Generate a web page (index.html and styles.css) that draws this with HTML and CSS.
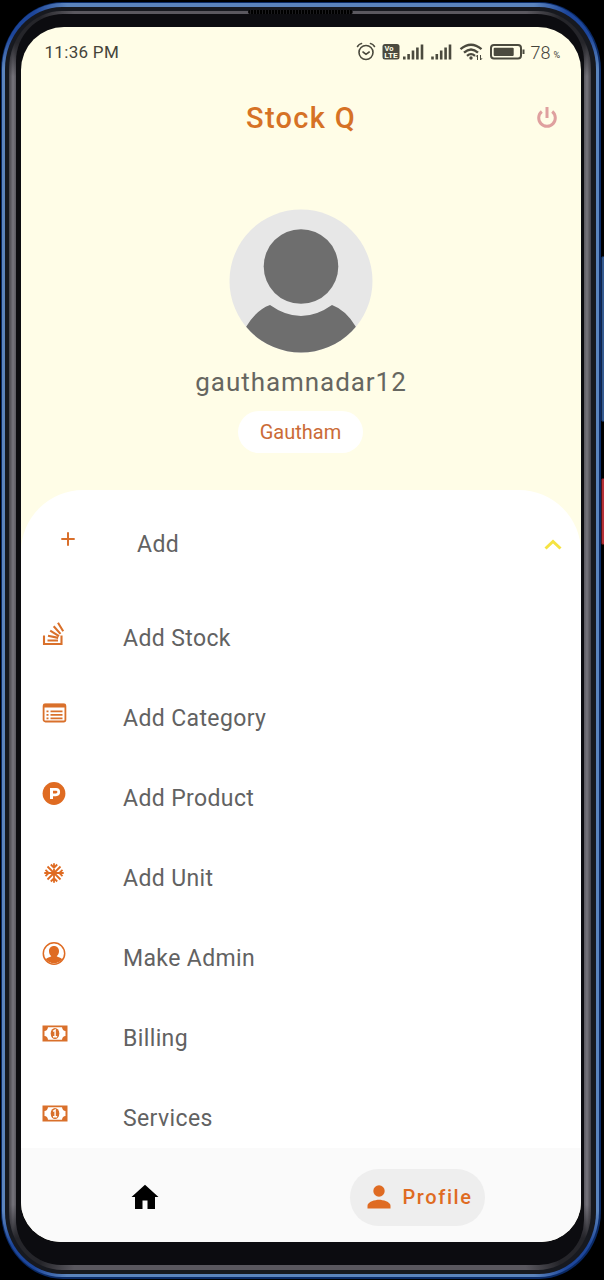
FILE: index.html
```html
<!DOCTYPE html>
<html lang="en">
<head>
<meta charset="utf-8">
<title>Stock Q</title>
<link rel="stylesheet" href="styles.css">
</head>
<body>
<div class="stage">
  <div class="key volume"></div>
  <div class="key power-key"></div>
  <div class="case"><div class="rim"><div class="groove"><div class="metal"><div class="bezel">
    <main class="screen">
      <section class="hero">
        <div class="status">
          <span class="clock">11:36 PM</span>
          <svg class="status-icons" width="172" height="22" viewBox="0 0 172 22" fill="none" stroke="#4b4a3e">
            <g stroke-width="1.6" stroke-linecap="round"><circle cx="12" cy="11.5" r="7"/><path d="M3.500 5.500Q5 3 7.500 2.500M16.500 2.500Q19 3 20.500 5.500M9 11l3 2.300 3.200-2.300"/></g>
            <rect x="28.500" y="3" width="17" height="15.500" rx="2.500" fill="#4b4a3e" stroke="none"/>
            <text x="30.500" y="10" class="volte">Vo</text><text x="30.300" y="17.300" class="volte" textLength="13.500" lengthAdjust="spacingAndGlyphs">LTE</text>
            <path stroke-width="2.600" d="M50.300 18.500v-3M54.600 18.500v-5.500M59 18.500v-9M63.400 18.500V6.500M68 18.500V3.500M78.500 18.500v-3M82.800 18.500v-5.500M87.200 18.500v-9M91.600 18.500V6.500M96 18.500V3.500"/>
            <path stroke-width="2.300" d="M106.500 8.200q10.500-9 21 0M110 11.700q7-6.500 14 0M113 14.900q4-3.500 8 0"/>
            <circle cx="117" cy="17" r="1.700" fill="#4b4a3e" stroke="none"/>
            <path stroke-width="1" d="M123.500 19v-5l-1.500 1.800M126.500 14v5l1.500-1.800"/>
            <rect x="137" y="4" width="30" height="13.500" rx="3" stroke-width="2"/><rect x="139.700" y="6.700" width="20" height="8.200" rx="1" fill="#4b4a3e" stroke="none"/><path stroke-width="2" d="M169.500 8.500v4.500"/>
          </svg>
          <span class="charge">78</span><span class="pct">%</span>
        </div>
        <header class="topbar">
          <h1 class="brand">Stock Q</h1>
          <svg class="logout" width="22" height="22" viewBox="0 0 22 22" fill="none" stroke="#dfa09f" stroke-width="3"><path d="M5.800 4.500a8.300 8.300 0 1 0 10.400 0M11 0v11"/></svg>
        </header>
        <svg class="avatar" width="144" height="144" viewBox="0 0 144 144">
          <defs><clipPath id="disc"><circle cx="72" cy="72" r="71.500"/></clipPath></defs>
          <circle cx="72" cy="72" r="71.500" fill="#e7e7e7"/>
          <g clip-path="url(#disc)" fill="#6e6e6e"><path d="M41 96Q72 118 103 96Q117 101 127 118L127 144H17V118Q27 101 41 96Z"/><circle cx="72" cy="57.500" r="37.300"/></g>
        </svg>
        <div class="username">gauthamnadar12</div>
        <div class="badge">Gautham</div>
      </section>
      <section class="sheet">
        <div class="add-head">
          <svg class="plus" width="14" height="14" viewBox="0 0 14 14" stroke="#d96f2b" stroke-width="2"><path d="M7 .3v13.400M.3 7h13.400"/></svg>
          <span class="add-title">Add</span>
          <svg class="chevron" width="18" height="11" viewBox="0 0 18 11" fill="none" stroke="#f5e342" stroke-width="3"><path d="M1.500 9.500L9 2.500l7.500 7"/></svg>
        </div>
        <ul class="menu">
          <li><svg width="28" height="28" viewBox="0 0 28 28" fill="none" stroke="#d9702b" stroke-width="2.100"><path d="M3 15.500v8.500h17.500v-8.500M6.500 20.500h10.500M7 15.700l10.200 2.200M9.200 10.700l8.800 5.500M12.700 6.200l6.800 7.700M17 2.700l5.200 8.500"/></svg><span>Add Stock</span></li>
          <li><svg width="28" height="28" viewBox="0 0 28 28" fill="none" stroke="#d9702b"><rect x="2.600" y="4.500" width="21.800" height="17" rx="1.800" stroke-width="1.800"/><path stroke-width="3.800" d="M2.500 5.700h22"/><path stroke-width="1.700" d="M5.500 11.300h2M9.500 11.300h12M5.500 14.800h2M9.500 14.800h12M5.500 18.300h2M9.500 18.300h12"/></svg><span>Add Category</span></li>
          <li><svg width="28" height="28" viewBox="0 0 28 28"><circle cx="13" cy="13.500" r="11.400" fill="#df6b22"/><path fill="#fff" fill-rule="evenodd" d="M9 8h6a4 4 0 0 1 0 8.200h-3V19H9ZM12 10.700v2.800h3a1.400 1.400 0 0 0 0-2.800Z"/></svg><span>Add Product</span></li>
          <li><svg width="28" height="28" viewBox="0 0 28 28" fill="none" stroke="#df6b22" stroke-width="1.800"><path d="M13 3.300v19.400M3.300 13h19.400M6.500 6.500l13 13M19.500 6.500l-13 13M9.800 4.500l3.200 3.200 3.200-3.200M9.800 21.500l3.200-3.200 3.200 3.200M4.500 9.800l3.200 3.200-3.200 3.200M21.500 9.800l-3.200 3.200 3.200 3.200"/></svg><span>Add Unit</span></li>
          <li><svg width="28" height="28" viewBox="0 0 28 28"><circle cx="13" cy="13.500" r="10.700" fill="none" stroke="#df6b22" stroke-width="1.500"/><path fill="#df6b22" d="M13 6c3 0 5 2.200 5 5.200 0 2-1 4-2.300 5 1.500 1.100 4.300 1.300 5.600 3-4.300 5.400-12.300 5.400-16.600 0 1.300-1.700 4.100-1.900 5.600-3C9 15.200 8 13.200 8 11.200 8 8.200 10 6 13 6Z"/></svg><span>Make Admin</span></li>
          <li><svg width="28" height="28" viewBox="0 0 28 28"><path fill="#d9702b" fill-rule="evenodd" d="M1.500 5.500h25v16H1.500ZM7 7.300Q6.500 11 3.500 11v5q3 0 3.500 3.700h14Q21.500 16 24.500 16v-5q-3 0-3.500-3.700Z"/><ellipse cx="14" cy="13.500" rx="4.300" ry="5.500" fill="#d9702b"/><path fill="none" stroke="#fff" stroke-width="1.400" d="M12.100 11.300l2-1.300v6.700M12 16.700h4.200"/></svg><span>Billing</span></li>
          <li><svg width="28" height="28" viewBox="0 0 28 28"><path fill="#d9702b" fill-rule="evenodd" d="M1.500 5.500h25v16H1.500ZM7 7.300Q6.500 11 3.500 11v5q3 0 3.500 3.700h14Q21.500 16 24.500 16v-5q-3 0-3.500-3.700Z"/><ellipse cx="14" cy="13.500" rx="4.300" ry="5.500" fill="#d9702b"/><path fill="none" stroke="#fff" stroke-width="1.400" d="M12.100 11.300l2-1.300v6.700M12 16.700h4.200"/></svg><span>Services</span></li>
        </ul>
      </section>
      <nav class="tabs">
        <svg class="home" width="28" height="26" viewBox="0 0 28 26"><path d="M14 .7L27.500 13h-3.500v12h-7.500v-8.500h-5V25H4V13H.5Z"/></svg>
        <div class="profile"><svg width="24" height="24" viewBox="0 0 24 24" fill="#df6b22"><circle cx="12" cy="6" r="5.700"/><path d="M.5 23.500v-2.700c0-4 7.700-6 11.500-6s11.500 2 11.500 6v2.700Z"/></svg><span>Profile</span></div>
      </nav>
    </main>
  </div></div></div></div></div>
  <div class="speaker"></div>
</div>
</body>
</html>
```
FILE: styles.css
```css
* { box-sizing: border-box; }
body { margin: 0; background: #000; font-family: Roboto, "Liberation Sans", sans-serif; }
.stage { position: relative; width: 604px; height: 1280px; padding: 2px 3px 1px 1px; overflow: hidden; background: #000; }
.key { position: absolute; left: 601px; width: 5px; border: 1px solid #11264a; border-radius: 2px; }
.volume { top: 256px; height: 166px; background: #345a91; }
.power-key { top: 478px; height: 67px; background: #b62f37; border-color: #4b1519; }
.speaker { position: absolute; left: 248px; top: 10px; width: 105px; height: 4px; border-radius: 2px; background: repeating-linear-gradient(90deg, #000 0 2px, #1c1c1e 2px 3px); }

.case, .rim, .groove, .metal, .bezel { height: 100%; }
.case { padding: 1px 2px 2px 1px; border-radius: 62px / 68px; background: #0a2a66; }
.rim {
  padding: 4px 3px 3px; border-radius: 60px / 66px;
  background:
    radial-gradient(circle at 12px 12px, #1d469b 20px, transparent 54px),
    radial-gradient(circle at calc(100% - 12px) 12px, #1d469b 20px, transparent 54px),
    radial-gradient(circle at 12px calc(100% - 12px), #1d469b 20px, transparent 54px),
    radial-gradient(circle at calc(100% - 12px) calc(100% - 12px), #1d469b 20px, transparent 54px),
    #5b84bd;
}
.groove { padding: 4px 5px 4px 4px; border-radius: 57px / 62px; background: #17191f; }
.metal {
  padding: 3px 7px 5px; border-radius: 53px / 58px;
  background:
    radial-gradient(circle at 12px 12px, #25252a 20px, transparent 54px),
    radial-gradient(circle at calc(100% - 12px) 12px, #25252a 20px, transparent 54px),
    radial-gradient(circle at 12px calc(100% - 12px), #25252a 20px, transparent 54px),
    radial-gradient(circle at calc(100% - 12px) calc(100% - 12px), #25252a 20px, transparent 54px),
    linear-gradient(90deg, #45434a 0, #77757d 4px, #5a585f 7px, #5a585f calc(100% - 7px), #77757d calc(100% - 4px), #45434a 100%);
}
.bezel { padding: 13px 3px 22px 5px; border-radius: 47px 47px 45px 45px; background: #0c0c10; }
.screen { display: flex; flex-direction: column; height: 1215px; overflow: hidden; border-radius: 43px 43px 40px 40px; background: #fffde7; }

.hero { display: flex; flex-direction: column; align-items: center; height: 463px; flex: none; }
.status { display: flex; align-items: center; width: 100%; height: 50px; padding: 0 21px 0 23.5px; color: #45443a; }
.clock { flex: 1; font-size: 17px; letter-spacing: .3px; }
.status-icons { flex: none; }
.volte { font-size: 7.5px; font-weight: 700; fill: #fffde7; stroke: none; }
.charge { font-size: 18px; font-weight: 300; margin-left: 4px; }
.pct { font-size: 9px; margin: 6px 0 0 3px; }
.topbar { display: grid; grid-template-columns: 1fr auto 1fr; align-items: center; width: 100%; height: 80px; padding: 1px 23px 0 0; }
.brand { grid-column: 2; margin: 0 -23px 0 0; color: #d67225; font-size: 29px; font-weight: 500; letter-spacing: 1.3px; }
.logout { justify-self: end; }
.avatar { flex: none; margin: 52px 1px 0 0; }
.username { height: 58px; line-height: 58px; color: #666660; font-size: 26px; letter-spacing: .95px; }
.badge { height: 42px; line-height: 43px; margin-right: 1px; padding: 0 22px; border-radius: 21px; background: #fff; color: #cb6b37; font-size: 20px; }

.sheet { flex: 1; min-height: 0; overflow: hidden; border-radius: 62px 62px 0 0; background: #fff; color: #626262; font-size: 23px; letter-spacing: .38px; }
.add-head { display: flex; align-items: center; height: 108px; padding: 0 19px 0 40px; }
.plus { margin-top: -10px; }
.add-title { flex: 1; margin-left: 62px; }
.menu { list-style: none; margin: 0; padding: 0; }
.menu li { display: flex; align-items: center; height: 80px; padding: 1px 0 0 20px; }
.menu svg { flex: none; margin: -9px 54px 0 0; }
.tabs { display: grid; grid-template-columns: 1fr 1fr; align-items: center; flex: none; height: 94px; background: #fafafa; }
.home { justify-self: center; margin: 3px 32px 0 0; }
.profile { display: flex; align-items: center; gap: 12px; width: 135px; height: 57px; margin: 4px 0 0 49px; padding-left: 16.5px; border-radius: 29px; background: #eee; color: #df6b22; font-size: 20px; font-weight: 500; letter-spacing: 1.6px; }
```
